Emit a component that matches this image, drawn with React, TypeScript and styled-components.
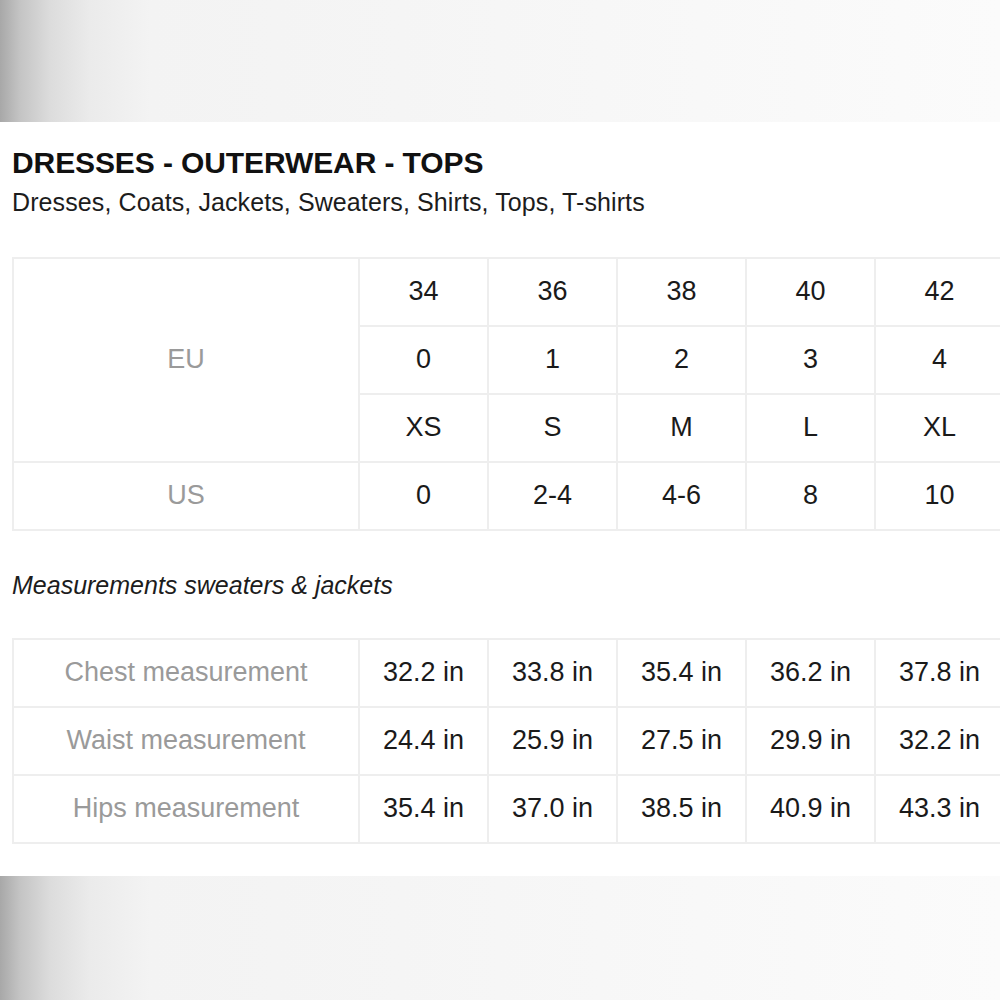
import React from "react";
import styled, { createGlobalStyle } from "styled-components";

const Global = createGlobalStyle`
  html, body { margin: 0; padding: 0; background: #ffffff; }
  body { font-family: "Liberation Sans", Arial, sans-serif; }
`;

const Page = styled.div`
  width: 1000px;
  height: 1000px;
  display: flex;
  flex-direction: column;
  overflow: hidden;
  background: #ffffff;
`;

const Band = styled.div<{ $h: number }>`
  flex: none;
  height: ${(p) => p.$h}px;
  background: linear-gradient(
    to right,
    #a8a8a8 0px,
    #c4c4c4 20px,
    #dcdcdc 50px,
    #ebebeb 90px,
    #f3f3f3 150px,
    #f5f5f5 400px,
    #f8f8f8 700px,
    #fbfbfb 1000px
  );
`;

const Content = styled.div`
  flex: 1;
  padding: 26px 0 0 12px;
  display: flex;
  flex-direction: column;
`;

const Title = styled.h1`
  margin: 0;
  font-size: 30px;
  line-height: 30px;
  font-weight: 700;
  color: #111111;
  letter-spacing: -0.1px;
`;

const Subtitle = styled.p`
  margin: 12px 0 0;
  font-size: 25px;
  line-height: 25px;
  color: #1c1c1c;
  letter-spacing: 0.1px;
`;

const Caption = styled.p`
  margin: 42px 0 0;
  font-size: 25px;
  line-height: 25px;
  font-style: italic;
  color: #1c1c1c;
`;

const Table = styled.table<{ $mt: number }>`
  margin-top: ${(p) => p.$mt}px;
  width: 991px;
  flex: none;
  table-layout: fixed;
  border-collapse: collapse;
  border: 2px solid #eeeeee;
`;

const Cell = styled.td<{ $label?: boolean }>`
  height: 63px;
  padding: 0 0 3px;
  border: 2px solid #eeeeee;
  text-align: center;
  vertical-align: middle;
  font-size: 27px;
  line-height: 30px;
  color: ${(p) => (p.$label ? "#9a9a9a" : "#1a1a1a")};
`;

const sizes = [
  ["34", "36", "38", "40", "42"],
  ["0", "1", "2", "3", "4"],
  ["XS", "S", "M", "L", "XL"],
];
const us = ["0", "2-4", "4-6", "8", "10"];

const measures: [string, string[]][] = [
  ["Chest measurement", ["32.2 in", "33.8 in", "35.4 in", "36.2 in", "37.8 in"]],
  ["Waist measurement", ["24.4 in", "25.9 in", "27.5 in", "29.9 in", "32.2 in"]],
  ["Hips measurement", ["35.4 in", "37.0 in", "38.5 in", "40.9 in", "43.3 in"]],
];

const Cols = () => (
  <colgroup>
    <col style={{ width: 346 }} />
    {[0, 1, 2, 3, 4].map((i) => (
      <col key={i} style={{ width: 129 }} />
    ))}
  </colgroup>
);

export default function App() {
  return (
    <Page>
      <Global />
      <Band $h={122} />
      <Content>
        <Title>DRESSES - OUTERWEAR - TOPS</Title>
        <Subtitle>Dresses, Coats, Jackets, Sweaters, Shirts, Tops, T-shirts</Subtitle>
        <Table $mt={42}>
          <Cols />
          <tbody>
            {sizes.map((row, ri) => (
              <tr key={ri}>
                {ri === 0 && (
                  <Cell $label rowSpan={3}>
                    EU
                  </Cell>
                )}
                {row.map((v) => (
                  <Cell key={v}>{v}</Cell>
                ))}
              </tr>
            ))}
            <tr>
              <Cell $label>US</Cell>
              {us.map((v) => (
                <Cell key={v}>{v}</Cell>
              ))}
            </tr>
          </tbody>
        </Table>
        <Caption>Measurements sweaters &amp; jackets</Caption>
        <Table $mt={40}>
          <Cols />
          <tbody>
            {measures.map(([label, vals]) => (
              <tr key={label}>
                <Cell $label>{label}</Cell>
                {vals.map((v, i) => (
                  <Cell key={i}>{v}</Cell>
                ))}
              </tr>
            ))}
          </tbody>
        </Table>
      </Content>
      <Band $h={124} />
    </Page>
  );
}
